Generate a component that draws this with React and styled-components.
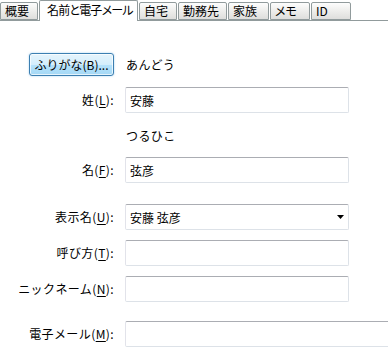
import React from "react";
import styled, { createGlobalStyle } from "styled-components";

const Global = createGlobalStyle`
  html, body { margin: 0; padding: 0; background: #ffffff; }
  body { font-family: "Noto Sans CJK JP", "Noto Sans", sans-serif; color: #000; }
`;

const Page = styled.div`
  width: 388px;
  height: 352px;
  overflow: hidden;
  background: #fff;
`;

const TabBar = styled.div`
  display: flex;
  align-items: flex-end;
  height: 20px;
  border-bottom: 1px solid #919b9c;
`;

const Tab = styled.div`
  box-sizing: border-box;
  width: ${(p) => p.$w}px;
  margin-left: ${(p) => (p.$first ? 0 : 1)}px;
  height: ${(p) => (p.$active ? 21 : 18)}px;
  margin-bottom: ${(p) => (p.$active ? -1 : 0)}px;
  padding-left: ${(p) => (p.$active ? 7 : 4)}px;
  border: 1px solid #919b9c;
  border-bottom: ${(p) => (p.$active ? "none" : "1px solid #919b9c")};
  border-radius: 2px 2px 0 0;
  background: ${(p) =>
    p.$active ? "#ffffff" : "linear-gradient(to bottom, #fdfdfd 0%, #efefed 45%, #dededc 100%)"};
  font-size: 12px;
  font-feature-settings: "palt";
  letter-spacing: ${(p) => (p.$active ? -0.8 : 0)}px;
  line-height: ${(p) => (p.$active ? 18 : 15)}px;
  white-space: nowrap;
  overflow: hidden;
  color: #000;
  position: relative;
  z-index: ${(p) => (p.$active ? 1 : 0)};
`;

const Form = styled.div`
  display: flex;
  flex-direction: column;
`;

const Row = styled.div`
  display: grid;
  grid-template-columns: 114px ${(p) => (p.$wide ? 280 : 224)}px;
  column-gap: 11px;
  align-items: center;
  margin-top: ${(p) => p.$mt}px;
  height: ${(p) => p.$h || 26}px;
`;

const Label = styled.label`
  justify-self: end;
  font-size: 12px;
  letter-spacing: 0.4px;
  line-height: 16px;
  white-space: nowrap;
  color: #000;
  u { text-decoration: underline; text-underline-offset: 2px; color: #000; }
`;

const FuriButton = styled.button`
  justify-self: end;
  box-sizing: border-box;
  width: 85px;
  height: 23px;
  padding: 0;
  border: 1px solid #3c7fb1;
  border-radius: 3px;
  background: linear-gradient(to bottom, #e5f4fc 0%, #d4eefc 50%, #b6e2fb 51%, #a4d8f5 100%);
  box-shadow: inset 0 0 0 1px rgba(255, 255, 255, 0.7), 0 0 2px rgba(60, 160, 230, 0.5);
  font-family: "Noto Sans CJK JP", "Noto Sans", sans-serif;
  font-size: 12px;
  color: #000;
  white-space: nowrap;
`;

const Kana = styled.span`
  font-size: 12px;
  letter-spacing: 0.4px;
  padding-left: 1px;
  color: #000;
`;

const Field = styled.div`
  box-sizing: border-box;
  height: 26px;
  border: 1px solid #dde2e8;
  border-top-color: #abadb3;
  border-left-color: #e2e3ea;
  border-radius: 2px;
  background: #fff;
  padding: 0 4px;
  display: flex;
  align-items: center;
  justify-content: space-between;
  font-size: 12px;
  white-space: nowrap;
  color: #000;
`;

const Arrow = styled.svg`
  width: 7px;
  height: 4px;
  margin-right: 0;
`;

export default function App() {
  return (
    <Page>
      <Global />
      <TabBar>
        <Tab $w={38} $first>概要</Tab>
        <Tab $w={99} $active>名前と電子メール</Tab>
        <Tab $w={38}>自宅</Tab>
        <Tab $w={49}>勤務先</Tab>
        <Tab $w={41}>家族</Tab>
        <Tab $w={40}>メモ</Tab>
        <Tab $w={40}>ID</Tab>
      </TabBar>
      <Form>
        <Row $mt={32} $h={23}>
          <FuriButton>ふりがな(B)...</FuriButton>
          <Kana>あんどう</Kana>
        </Row>
        <Row $mt={11}>
          <Label>姓(<u>L</u>):</Label>
          <Field>安藤</Field>
        </Row>
        <Row $mt={13} $h={18}>
          <span />
          <Kana>つるひこ</Kana>
        </Row>
        <Row $mt={13}>
          <Label>名(<u>F</u>):</Label>
          <Field>弦彦</Field>
        </Row>
        <Row $mt={21}>
          <Label>表示名(<u>U</u>):</Label>
          <Field>
            安藤 弦彦
            <Arrow viewBox="0 0 7 4">
              <path d="M0 0H7L3.5 4Z" fill="#000" />
            </Arrow>
          </Field>
        </Row>
        <Row $mt={10}>
          <Label>呼び方(<u>T</u>):</Label>
          <Field />
        </Row>
        <Row $mt={10}>
          <Label>ニックネーム(<u>N</u>):</Label>
          <Field />
        </Row>
        <Row $mt={19} $wide>
          <Label>電子メール(<u>M</u>):</Label>
          <Field />
        </Row>
      </Form>
    </Page>
  );
}
